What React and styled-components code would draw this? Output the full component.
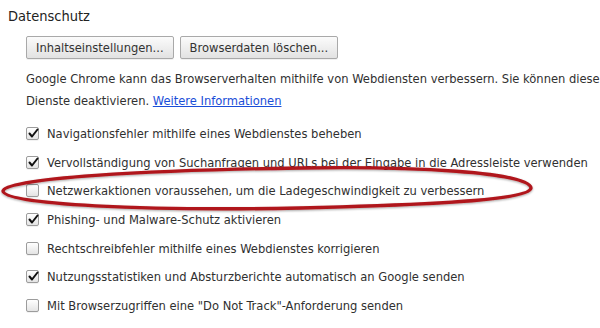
import React from "react";
import styled, { createGlobalStyle } from "styled-components";

const Global = createGlobalStyle`
  html, body { margin: 0; padding: 0; background: #fff; }
  body { font-family: "DejaVu Sans Condensed", "DejaVu Sans", sans-serif; font-stretch: condensed; color: #303030; }
`;

const Page = styled.div`
  position: relative;
  width: 600px;
  height: 328px;
  overflow: hidden;
  padding: 0 0 0 8px;
  box-sizing: border-box;
`;

const Heading = styled.h3`
  margin: 0;
  padding-top: 6px;
  font-size: 14.5px;
  font-weight: normal;
  line-height: 20px;
  color: #222;
  height: 30px;
`;

const Section = styled.div`
  padding-left: 18px;
`;

const ButtonRow = styled.div`
  display: flex;
  gap: 6px;
  height: 23px;
`;

const Button = styled.button`
  height: 23px;
  padding: 0 9px;
  border: 1px solid #a9a9a9;
  border-radius: 2px;
  background: linear-gradient(#fbfbfb, #e2e2e2);
  box-shadow: 0 1px 0 rgba(0,0,0,0.06);
  font-family: inherit;
  font-stretch: condensed;
  font-size: 12.8px;
  color: #333;
  white-space: nowrap;
`;

const Para = styled.p`
  margin: 9px 0 0;
  font-size: 12.8px;
  line-height: 22px;
  width: 580px;
  white-space: nowrap;
`;

const Link = styled.a`
  color: #1a4ed8;
  text-decoration: underline;
`;

const List = styled.div`
  margin-top: 7px;
  display: flex;
  flex-direction: column;
`;

const Row = styled.label`
  display: flex;
  align-items: center;
  height: 28.7px;
  gap: 8px;
  font-size: 12.8px;
  white-space: nowrap;
`;

const Box = styled.span`
  width: 13px;
  height: 13px;
  box-sizing: border-box;
  border: 1px solid #9c9c9c;
  border-radius: 2px;
  background: linear-gradient(#ffffff, #e4e4e4);
  box-shadow: 0 1px 0 rgba(0,0,0,0.05);
  position: relative;
  flex: none;
`;

const Check = styled.svg`
  position: absolute;
  left: 1px;
  top: 0px;
`;

const Ellipse = styled.svg`
  position: absolute;
  left: 0;
  top: 0;
  pointer-events: none;
`;

const items = [
  [true, "Navigationsfehler mithilfe eines Webdienstes beheben"],
  [true, "Vervollständigung von Suchanfragen und URLs bei der Eingabe in die Adressleiste verwenden"],
  [false, "Netzwerkaktionen voraussehen, um die Ladegeschwindigkeit zu verbessern"],
  [true, "Phishing- und Malware-Schutz aktivieren"],
  [false, "Rechtschreibfehler mithilfe eines Webdienstes korrigieren"],
  [true, "Nutzungsstatistiken und Absturzberichte automatisch an Google senden"],
  [false, 'Mit Browserzugriffen eine "Do Not Track"-Anforderung senden'],
];

function Checkbox({ checked }) {
  return (
    <Box>
      {checked && (
        <Check width="11" height="11" viewBox="0 0 11 11">
          <path d="M1.5 5.5 L4 8.5 L9.5 1.5" fill="none" stroke="#111" strokeWidth="2" strokeLinecap="round" strokeLinejoin="round" />
        </Check>
      )}
    </Box>
  );
}

export default function App() {
  return (
    <Page>
      <Global />
      <Heading>Datenschutz</Heading>
      <Section>
        <ButtonRow>
          <Button>Inhaltseinstellungen...</Button>
          <Button>Browserdaten löschen...</Button>
        </ButtonRow>
        <Para>
          Google Chrome kann das Browserverhalten mithilfe von Webdiensten verbessern. Sie können diese
          <br />
          Dienste deaktivieren. <Link href="#">Weitere Informationen</Link>
        </Para>
        <List>
          {items.map(([c, t], i) => (
            <Row key={i}>
              <Checkbox checked={c} />
              {t}
            </Row>
          ))}
        </List>
      </Section>
      <Ellipse width="600" height="328" viewBox="0 0 600 328">
        <defs>
          <filter id="sh" x="-5%" y="-50%" width="110%" height="200%">
            <feDropShadow dx="0" dy="1" stdDeviation="0.8" floodColor="#000" floodOpacity="0.35" />
          </filter>
        </defs>
        <path
          d="M300 168 C 410 166, 530 172, 531 188 C 530 200, 430 205, 300 208 C 150 211, 4 205, 3 191 C 4 178, 150 170, 300 168 Z"
          fill="none"
          stroke="#b0151b"
          strokeWidth="3.4"
          filter="url(#sh)"
        />
      </Ellipse>
    </Page>
  );
}
